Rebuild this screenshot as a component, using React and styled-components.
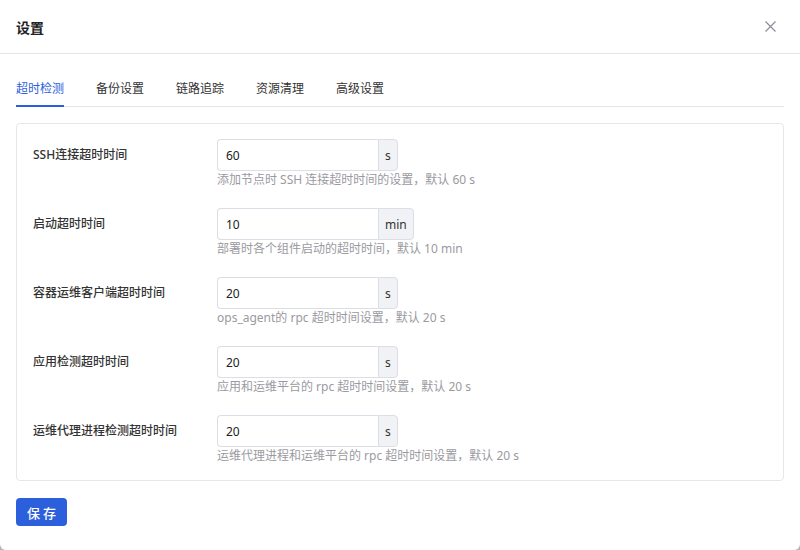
import React, { useState } from "react";
import styled, { createGlobalStyle } from "styled-components";

const Global = createGlobalStyle`
  html, body { margin: 0; padding: 0; background: #b5b5b8; }
  body { font-family: "Noto Sans", "Noto Sans CJK SC", sans-serif; color: #333; }
  * { box-sizing: border-box; }
`;

const Dialog = styled.div`
  width: 800px;
  height: 550px;
  background: #fff;
  border-radius: 0 0 6px 6px;
  display: flex;
  flex-direction: column;
`;

const Header = styled.div`
  height: 54px;
  flex: none;
  display: flex;
  align-items: center;
  justify-content: space-between;
  padding: 0 16px;
  border-bottom: 1px solid #e6e7ee;
`;

const Title = styled.div`
  font-size: 14px;
  font-weight: 600;
  color: #222;
`;

const Close = styled.button`
  border: none;
  background: none;
  padding: 0;
  width: 12px;
  height: 12px;
  display: flex;
  align-items: center;
  justify-content: center;
  margin-right: 8px;
  cursor: pointer;
`;

const Body = styled.div`
  padding: 17px 16px 0;
  display: flex;
  flex-direction: column;
`;

const TabBar = styled.div`
  display: flex;
  gap: 32px;
  border-bottom: 1px solid #e6e7ee;
  height: 36px;
`;

const Tab = styled.div`
  font-size: 12px;
  line-height: 36px;
  height: 36px;
  color: ${p => (p.$active ? "#2d5fdd" : "#333")};
  border-bottom: 2px solid ${p => (p.$active ? "#2d5fdd" : "transparent")};
  margin-bottom: -1px;
  cursor: pointer;
  white-space: nowrap;
`;

const Card = styled.div`
  margin-top: 16px;
  border: 1px solid #e6e7ee;
  border-radius: 4px;
  padding: 15px 16px 16px;
  display: flex;
  flex-direction: column;
  gap: 19px;
  height: 358px;
`;

const Row = styled.div`
  display: flex;
  align-items: flex-start;
`;

const Label = styled.div`
  width: 184px;
  flex: none;
  font-size: 12px;
  font-weight: 500;
  line-height: 32px;
  color: #333;
`;

const Field = styled.div`
  display: flex;
  flex-direction: column;
`;

const InputGroup = styled.div`
  display: flex;
  height: 32px;
`;

const Input = styled.input`
  width: 161px;
  height: 32px;
  border: 1px solid #dcdde6;
  border-right: none;
  border-radius: 4px 0 0 4px;
  padding: 0 8px;
  font-family: inherit;
  font-size: 12px;
  color: #222;
  outline: none;
`;

const Addon = styled.div`
  height: 32px;
  padding: 0 6px;
  display: flex;
  align-items: center;
  background: #f0f2f6;
  border: 1px solid #dcdde6;
  border-radius: 0 4px 4px 0;
  font-size: 12px;
  color: #333;
`;

const Help = styled.div`
  font-size: 12px;
  line-height: 16px;
  margin-top: 1px;
  margin-bottom: 1px;
  color: #9a9a9f;
`;

const Footer = styled.div`
  margin-top: 17px;
  display: flex;
`;

const SaveButton = styled.button`
  height: 28px;
  width: 51px;
  border: none;
  border-radius: 4px;
  background: #2c5fdc;
  color: #fff;
  font-family: inherit;
  font-size: 13px;
  font-weight: 500;
  letter-spacing: 3px;
  padding: 0 0 0 3px;
  cursor: pointer;
`;

const tabs = ["超时检测", "备份设置", "链路追踪", "资源清理", "高级设置"];

const rows = [
  { label: "SSH连接超时时间", value: "60", unit: "s", help: "添加节点时 SSH 连接超时时间的设置，默认 60 s" },
  { label: "启动超时时间", value: "10", unit: "min", help: "部署时各个组件启动的超时时间，默认 10 min" },
  { label: "容器运维客户端超时时间", value: "20", unit: "s", help: "ops_agent的 rpc 超时时间设置，默认 20 s" },
  { label: "应用检测超时时间", value: "20", unit: "s", help: "应用和运维平台的 rpc 超时时间设置，默认 20 s" },
  { label: "运维代理进程检测超时时间", value: "20", unit: "s", help: "运维代理进程和运维平台的 rpc 超时时间设置，默认 20 s" },
];

export default function App() {
  const [active, setActive] = useState(0);
  return (
    <>
      <Global />
      <Dialog>
        <Header>
          <Title>设置</Title>
          <Close aria-label="close">
            <svg width="11" height="11" viewBox="0 0 11 11">
              <path d="M0.5 0.5L10.5 10.5M10.5 0.5L0.5 10.5" stroke="#8a8f9c" strokeWidth="1.2" fill="none" />
            </svg>
          </Close>
        </Header>
        <Body>
          <TabBar>
            {tabs.map((t, i) => (
              <Tab key={t} $active={i === active} onClick={() => setActive(i)}>
                {t}
              </Tab>
            ))}
          </TabBar>
          <Card>
            {rows.map(r => (
              <Row key={r.label}>
                <Label>{r.label}</Label>
                <Field>
                  <InputGroup>
                    <Input defaultValue={r.value} />
                    <Addon>{r.unit}</Addon>
                  </InputGroup>
                  <Help>{r.help}</Help>
                </Field>
              </Row>
            ))}
          </Card>
          <Footer>
            <SaveButton>保存</SaveButton>
          </Footer>
        </Body>
      </Dialog>
    </>
  );
}
